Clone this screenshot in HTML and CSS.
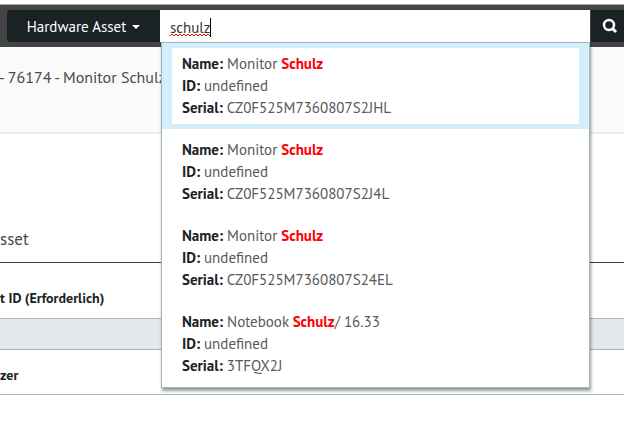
FILE: index.html
```html
<!DOCTYPE html>
<html lang="de">
<head>
<meta charset="utf-8">
<title>Hardware Asset</title>
<link rel="stylesheet" href="styles.css">
</head>
<body>
<header class="topbar">
  <button class="scope" type="button">Hardware Asset <span class="caret"></span></button>
  <div class="search">
    <input class="search-input" type="text" value="schulz" aria-label="Suche" spellcheck="false">
    <svg class="typing" width="44" height="20" viewBox="0 0 44 20" aria-hidden="true">
      <path d="M0 18l2-2 2 2 2-2 2 2 2-2 2 2 2-2 2 2 2-2 2 2 2-2 2 2 2-2 2 2 2-2 2 2 2-2 2 2 2-2 2 2" fill="none" stroke="#f00"/>
      <path d="M40.500 0v19" stroke="#000"/>
    </svg>
    <ul class="results">
      <li class="result selected"><b>Name:</b> Monitor <mark>Schulz</mark><br><b>ID:</b> undefined<br><b>Serial:</b> CZ0F525M7360807S2JHL</li>
      <li class="result"><b>Name:</b> Monitor <mark>Schulz</mark><br><b>ID:</b> undefined<br><b>Serial:</b> CZ0F525M7360807S2J4L</li>
      <li class="result"><b>Name:</b> Monitor <mark>Schulz</mark><br><b>ID:</b> undefined<br><b>Serial:</b> CZ0F525M7360807S24EL</li>
      <li class="result"><b>Name:</b> Notebook <mark>Schulz</mark>/ 16.33<br><b>ID:</b> undefined<br><b>Serial:</b> 3TFQX2J</li>
    </ul>
  </div>
  <button class="go" type="button" aria-label="Suchen">
    <svg width="16" height="16" viewBox="0 0 16 16" aria-hidden="true"><circle cx="7" cy="7" r="5" fill="none" stroke="#fff" stroke-width="2.500"/><path d="M10.500 10.500l3.500 3.500" stroke="#fff" stroke-width="3"/></svg>
  </button>
</header>
<div class="heading"><h1>- 76174 - Monitor Schulz</h1></div>
<main>
  <h2>sset</h2>
  <label for="asset-id">t ID (Erforderlich)</label>
  <input class="field" id="asset-id" type="text" readonly>
  <label for="user">zer</label>
  <div class="rule"><input class="plain" id="user" type="text"></div>
</main>
</body>
</html>
```
FILE: styles.css
```css
* { box-sizing: border-box; }
body {
  margin: 0;
  padding-top: 4px;
  overflow: hidden;
  background: #fff;
  color: #1a2225;
  font: 15px/22px "PT Sans", Lato, sans-serif;
}
button, input { font: inherit; }
.topbar {
  display: flex;
  padding: 5px 0 5px 7px;
  border-top: 1px solid #aaa;
  background: #444;
}
.scope {
  display: flex;
  align-items: center;
  justify-content: center;
  gap: 6px;
  width: 153px;
  height: 32px;
  padding: 2px 0 0;
  border: 0;
  border-radius: 3px 0 0 3px;
  background: #1a2226;
  color: #fff;
}
.caret {
  border: 4px solid transparent;
  border-top-color: #fff;
  border-bottom: 0;
}
.search { position: relative; flex: 1; }
.search-input {
  display: block;
  width: 100%;
  height: 32px;
  padding: 3px 10px 0;
  border: 0;
  outline: 0;
  background: #fff;
  color: #333;
}
.typing { position: absolute; left: 10px; top: 8px; }
.results {
  position: absolute;
  z-index: 1;
  top: 100%;
  left: 1px;
  right: 0;
  margin: 0;
  padding: 0;
  border: 1px solid #a0b4bf;
  background: #fff;
  box-shadow: 1px 3px 3px rgba(0, 0, 0, .4);
  list-style: none;
  color: #555a5d;
}
.result {
  padding: 5px 10px;
  border: solid transparent;
  border-width: 5px 10px;
}
.selected { border-color: #d4effc; }
.result b { color: #1a2225; }
.result mark { background: none; color: #f00; font-weight: 700; }
.go {
  width: 34px;
  height: 32px;
  padding: 0 0 0 4px;
  border: 0;
  border-left: 1px solid #444;
  background: #1a2226;
}
.go svg { display: block; margin: auto; }
.heading {
  height: 87px;
  padding: 19px 0;
  border-bottom: 2px solid #eee;
  background: #fafafa;
}
h1, h2 { margin: 0; font-weight: 400; color: #444a4d; line-height: 22px; }
h1 { font-size: 16px; text-indent: -1px; }
h2 {
  margin: 94px 0 24px;
  padding-bottom: 12px;
  border-bottom: 1px solid #444;
  font-size: 17px;
}
label { display: block; font-size: 14px; font-weight: 700; }
.field {
  display: block;
  width: 100%;
  height: 32px;
  margin: 9px 0 14px;
  border: solid #a0b4bf;
  border-width: 1px 0;
  background: #e3e8eb;
}
.rule { padding-top: 8px; }
.plain {
  display: block;
  width: 100%;
  height: 28px;
  border: 0;
  border-top: 1px solid #a0b4bf;
  background: #fff;
}
```
